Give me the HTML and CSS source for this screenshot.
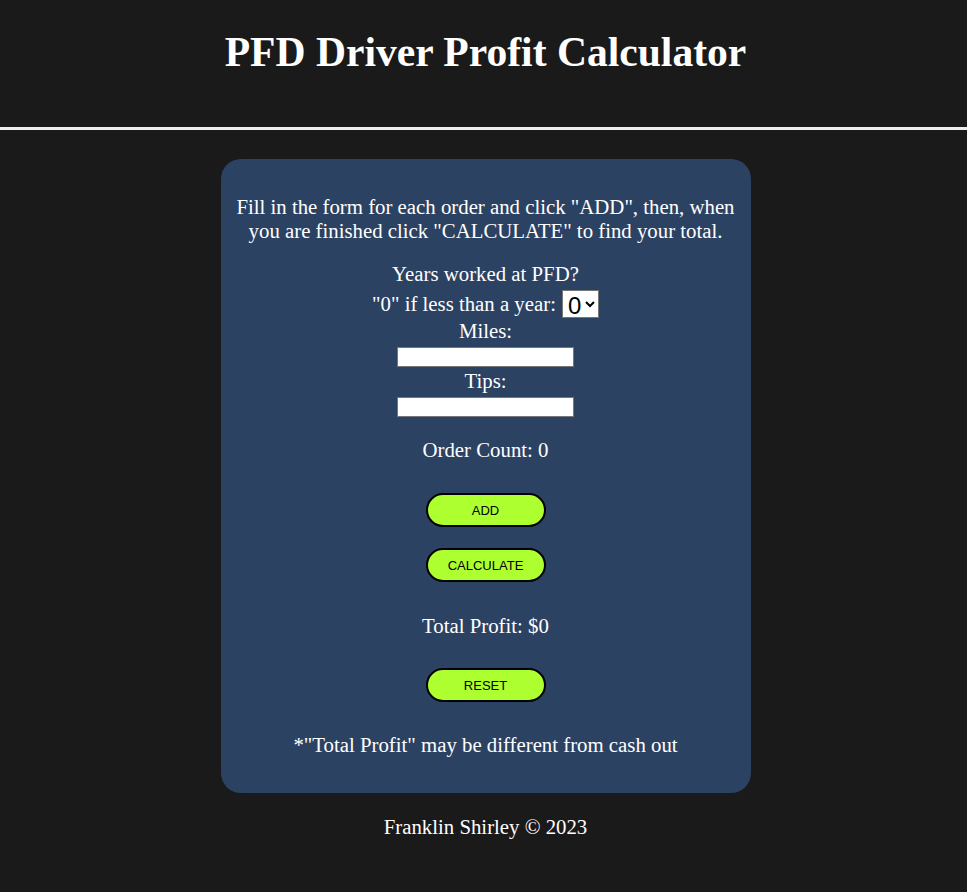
FILE: index.html
```html
<!DOCTYPE html>
<html lang="en">
<head>
<meta charset="utf-8">
<title>PFD Driver Profit Calculator</title>
<link rel="stylesheet" href="styles.css">
</head>
<body>
<header class="header">
  <h1 class="title">PFD Driver Profit Calculator</h1>
</header>
<div class="page">
  <main class="card">
    <p class="intro">Fill in the form for each order and click "ADD", then, when you are finished click "CALCULATE" to find your total.</p>
    <div class="line">Years worked at PFD?</div>
    <div class="years-row">
      <span>"0" if less than a year:</span>
      <select class="years">
        <option>0</option><option>1</option><option>2</option><option>3</option>
      </select>
    </div>
    <label class="line label" for="miles">Miles:</label>
    <input class="field" id="miles" type="text">
    <label class="line label2" for="tips">Tips:</label>
    <input class="field" id="tips" type="text">
    <div class="line count">Order Count: 0</div>
    <button class="btn btn-add" type="button">ADD</button>
    <button class="btn btn-calc" type="button">CALCULATE</button>
    <div class="line total">Total Profit: $0</div>
    <button class="btn btn-reset" type="button">RESET</button>
    <div class="line note">*"Total Profit" may be different from cash out</div>
  </main>
  <footer class="footer">Franklin Shirley © 2023</footer>
</div>
</body>
</html>
```
FILE: styles.css
```css
html, body {
  background: #1a1a1a;
}
body {
  margin: 0;
  color: #ffffff;
  font-family: "Liberation Serif", "Times New Roman", serif;
  font-size: 20.8px;
  min-height: 892px;
}
.header {
  height: 127px;
  border-bottom: 3px solid #eeeeee;
  display: flex;
  justify-content: center;
  padding-left: 4px;
}
.title {
  margin: 28px 0 0;
  font-size: 41.6px;
  line-height: 48px;
  font-weight: bold;
}
.page {
  padding-left: 4px;
}
.card {
  width: 530px;
  margin: 29px auto 0;
  box-sizing: border-box;
  background: #2c4263;
  border-radius: 20px;
  padding: 36px 8px 36px;
  display: flex;
  flex-direction: column;
  align-items: center;
  text-align: center;
}
.intro {
  margin: 0 0 19px;
  line-height: 24px;
  max-width: 506px;
}
.line {
  line-height: 24px;
  display: block;
}
.years-row {
  display: flex;
  align-items: center;
  justify-content: center;
  gap: 6px;
  height: 28px;
  margin-top: 4px;
}
.years {
  width: 37px;
  height: 28px;
  font-family: "Liberation Sans", Arial, sans-serif;
  font-size: 24px;
  background: #ffffff;
  color: #000000;
  border: 1px solid #767676;
  border-radius: 0;
  padding: 0 0 0 1px;
}
.label { margin-top: 1px; }
.label2 { margin-top: 2px; }
.field {
  width: 177px;
  height: 20px;
  box-sizing: border-box;
  margin-top: 4px;
  border: 1px solid #767676;
  background: #ffffff;
  padding: 1px 2px;
}
.count { margin-top: 21px; }
.btn {
  width: 120px;
  height: 34px;
  box-sizing: border-box;
  border: 2px solid #000000;
  border-radius: 17px;
  background: #adff2f;
  color: #000000;
  font-family: "Liberation Sans", Arial, sans-serif;
  font-size: 13px;
}
.btn-add { margin-top: 31px; }
.btn-calc { margin-top: 21px; }
.total { margin-top: 32px; }
.btn-reset { margin-top: 30px; }
.note { margin-top: 31px; }
.footer {
  margin-top: 22px;
  line-height: 24px;
  text-align: center;
}
```
